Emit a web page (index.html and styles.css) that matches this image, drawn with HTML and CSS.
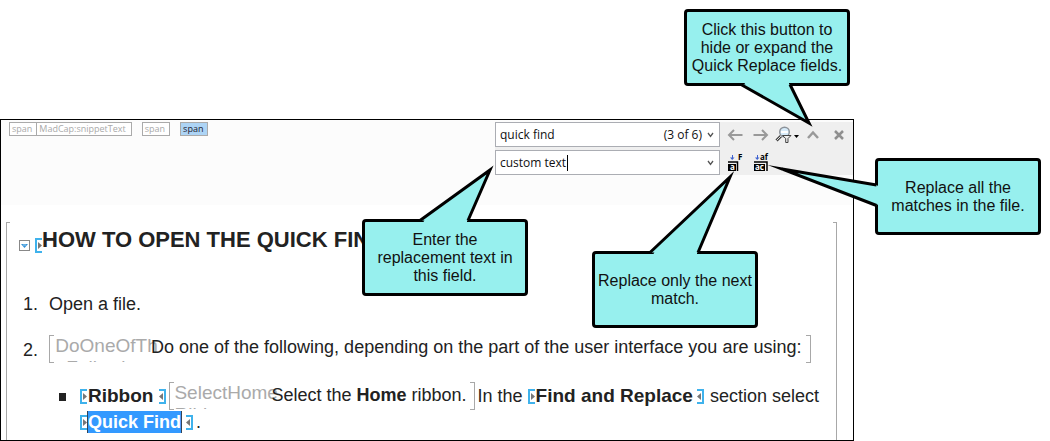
FILE: index.html
```html
<!DOCTYPE html>
<html lang="en">
<head>
<meta charset="utf-8">
<title>Quick Replace</title>
<link rel="stylesheet" href="styles.css">
</head>
<body>
<svg class="defs" aria-hidden="true">
  <symbol id="tag-open" viewBox="0 0 7 15"><path d="M7 1H1V14H7" fill="none" stroke="#3fb2ec" stroke-width="2"/><path d="M3 4L7 7.5L3 11Z" fill="#777"/></symbol>
  <symbol id="tag-close" viewBox="0 0 7 15"><path d="M0 1H6V14H0" fill="none" stroke="#3fb2ec" stroke-width="2"/><path d="M4 4L0 7.5L4 11Z" fill="#777"/></symbol>
</svg>

<main class="window">
  <header class="toolbar">
    <div class="crumbs">
      <div class="crumb-group"><span class="crumb">span</span><span class="crumb">MadCap:snippetText</span></div>
      <div class="crumb-group"><span class="crumb">span</span></div>
      <div class="crumb-group"><span class="crumb current">span</span></div>
    </div>
    <form class="finder">
      <div class="finder-row">
        <div class="field">
          <input type="text" value="quick find" aria-label="Find">
          <span class="count">(3 of 6)</span>
          <button type="button" class="drop" aria-label="Recent searches"><svg width="7" height="6" viewBox="0 0 7 6"><path d="M1 1L3.500 4.500L6 1" fill="none" stroke="#555" stroke-width="1.300"/></svg></button>
        </div>
        <button type="button" class="tool" aria-label="Find previous"><svg width="16" height="12" viewBox="0 0 16 12"><path d="M15.500 6H2M7 1L2 6L7 11" fill="none" stroke="#999" stroke-width="2"/></svg></button>
        <button type="button" class="tool" aria-label="Find next"><svg width="16" height="12" viewBox="0 0 16 12"><path d="M.5 6H14M9 1L14 6L9 11" fill="none" stroke="#999" stroke-width="2"/></svg></button>
        <button type="button" class="tool" aria-label="Search options"><svg width="25" height="18" viewBox="0 0 25 18"><path d="M1.500 14.500L6 10" stroke="#444" stroke-width="3"/><path d="M1.500 14.500L6 10" stroke="#ddd" stroke-width="1"/><circle cx="9.500" cy="6" r="4.800" fill="#d6ebfa" stroke="#8c9299" stroke-width="1.400"/><path d="M6 6H13" stroke="#fff" stroke-width="2"/><path d="M7.500 9.500H16L13 12.500V16.500H10.700V12.500Z" fill="#eee" stroke="#444"/><path d="M19 9H24L21.500 12Z" fill="#000"/></svg></button>
        <button type="button" class="tool" aria-label="Hide or expand replace fields"><svg width="14" height="9" viewBox="0 0 14 9"><path d="M2 8L7 2.500L12 8" fill="none" stroke="#999" stroke-width="2.500"/></svg></button>
        <button type="button" class="tool" aria-label="Close"><svg width="10" height="10" viewBox="0 0 10 10"><path d="M1 1L9 9M9 1L1 9" stroke="#8f8f8f" stroke-width="2.500"/></svg></button>
      </div>
      <div class="finder-row">
        <div class="field">
          <span class="entry"><input class="sized" type="text" value="custom text" aria-label="Replace with"></span>
          <button type="button" class="drop" aria-label="Recent replacements"><svg width="7" height="6" viewBox="0 0 7 6"><path d="M1 1L3.500 4.500L6 1" fill="none" stroke="#555" stroke-width="1.300"/></svg></button>
        </div>
        <button type="button" class="tool" aria-label="Replace next"><svg width="16" height="18" viewBox="0 0 16 18"><path d="M5.500 1V5" stroke="#3f62d0"/><path d="M3 3.500H7.500L5.200 6Z" fill="#3f62d0"/><text x="11" y="6" class="glyph">F</text><path d="M1 8H10.500V17" fill="none" stroke="#000" stroke-width="1.500"/><rect x="1" y="10" width="8" height="7"/><text x="3" y="16" class="glyph light">a</text></svg></button>
        <button type="button" class="tool" aria-label="Replace all"><svg width="16" height="18" viewBox="0 0 16 18"><path d="M4.500 1V5" stroke="#3f62d0"/><path d="M2 3.500H6.500L4.200 6Z" fill="#3f62d0"/><text x="7" y="6" class="glyph">af</text><path d="M1 8H14V17" fill="none" stroke="#000" stroke-width="1.500"/><rect x="1" y="10" width="11" height="7"/><text x="2" y="16" class="glyph light">ac</text></svg></button>
      </div>
    </form>
  </header>

  <article class="document">
    <h1 class="heading">
      <svg class="toggle" width="11" height="11" viewBox="0 0 11 11"><rect x=".5" y=".5" width="10" height="10" fill="#fff" stroke="#888"/><path d="M2 4H9L5.500 8Z" fill="#3593d8"/><path d="M4 5H7" stroke="#9fd0f2"/></svg>
      <svg class="tag low"><use href="#tag-open"/></svg>
      <span class="title">HOW TO OPEN THE QUICK FIND</span>
    </h1>
    <div class="step first"><span class="number">1.</span><span>Open a file.</span></div>
    <div class="step second">
      <span class="number lowered">2.</span>
      <span class="snippet wide"><span class="snippet-name centered">DoOneOfTh Following</span><span>Do one of the following, depending on the part of the user interface you are using:</span></span>
    </div>
    <div class="step choice">
      <span class="bullet"></span>
      <div class="lines">
        <div class="line">
          <svg class="tag"><use href="#tag-open"/></svg><b class="term spaced">Ribbon</b><svg class="tag"><use href="#tag-close"/></svg>
          <span class="snippet inner"><span class="snippet-name">SelectHome Ribbon</span><span>Select the <b>Home</b> ribbon.</span></span>
          <span class="joint">In the</span><svg class="tag"><use href="#tag-open"/></svg><b class="term">Find and Replace</b><svg class="tag after"><use href="#tag-close"/></svg><span class="tail-text">section select</span>
        </div>
        <div class="line last">
          <svg class="tag"><use href="#tag-open"/></svg><mark class="selected">Quick Find</mark><svg class="tag after"><use href="#tag-close"/></svg><span class="stop">.</span>
        </div>
      </div>
    </div>
  </article>
</main>

<aside class="callout hide-note">
  <svg class="pointer" width="166" height="77"><path class="mask" d="M60 73H105V77H62Z"/><path class="edge" d="M57 75.500L125 114L106 75.500"/></svg>
  <p>Click this button to hide or expand the Quick Replace fields.</p>
</aside>
<aside class="callout enter-note">
  <svg class="pointer" width="166" height="77"><path class="mask" d="M61 4H105V0H63Z"/><path class="edge" d="M58 1.500L128 -49L106 1.500"/></svg>
  <p>Enter the replacement text in this field.</p>
</aside>
<aside class="callout next-note">
  <svg class="pointer" width="166" height="77"><path class="mask" d="M61 4H105V0H63Z"/><path class="edge" d="M58 1.500L138 -74L106 1.500"/></svg>
  <p>Replace only the next match.</p>
</aside>
<aside class="callout all-note">
  <svg class="pointer" width="166" height="77"><path class="mask" d="M4 28V47L0 46V27Z"/><path class="edge" d="M1.500 27L-93 11L1.500 47.500"/></svg>
  <p>Replace all the matches in the file.</p>
</aside>
</body>
</html>
```
FILE: styles.css
```css
* { box-sizing: border-box; }
body {
  margin: 0;
  background: #fff;
  color: #222;
  font-family: "Liberation Sans", Arial, sans-serif;
  font-size: 18px;
  line-height: 24px;
  overflow: hidden;
}
.defs { position: absolute; width: 0; height: 0; }
.window {
  margin: 119px 196px 0 0;
  border: 1px solid #000;
}
button {
  display: flex;
  align-items: center;
  justify-content: center;
  border: 0;
  padding: 0;
  background: none;
}

/* Toolbar */
.toolbar {
  display: flex;
  justify-content: space-between;
  align-items: flex-start;
  padding: 2px 0 30px 8px;
  background: #fcfcfc;
}
.crumbs {
  display: flex;
  gap: 10px;
  font: 9px/12px "Open Sans", sans-serif;
}
.crumb-group { display: flex; }
.crumb {
  border: 1px solid #aaa;
  padding: 0 4px 0 2px;
  background: #fff;
  color: #aaa;
}
.crumb + .crumb { border-left: 0; padding-right: 5px; }
.crumb.current { background: #add4f5; color: #223; }
.finder {
  display: flex;
  flex-direction: column;
  gap: 3px;
  width: 358px;
  background: #efefef;
  font: 12px/16px "Open Sans", sans-serif;
}
.finder-row { display: flex; align-items: center; }
.field {
  flex: none;
  display: flex;
  align-items: center;
  width: 225px;
  height: 25px;
  margin-right: 2px;
  border: 1px solid #abadb3;
  background: #fff;
  color: #111;
}
.field input {
  flex: 1;
  min-width: 0;
  border: 0;
  outline: 0;
  padding: 0 0 0 4px;
  background: none;
  color: inherit;
  font: inherit;
}
.entry { flex: 1; }
.field .sized {
  width: 72px;
  border-right: 1px solid #000;
}
.drop { width: 17px; height: 20px; }
.tool { flex: none; width: 26px; height: 25px; }
.tool svg { flex: none; overflow: visible; }
.glyph { font: bold 8px "Open Sans", sans-serif; fill: #000; }
.glyph.light { fill: #fff; }

/* Document */
.document {
  position: relative;
  margin: 17px 16px 0 5px;
  padding: 5px 0 6px 12px;
  border: solid #a8a8a8;
  border-width: 0 1px;
}
.document::before,
.document::after {
  content: "";
  position: absolute;
  top: 0;
  width: 3px;
  height: 1px;
  background: #a8a8a8;
}
.document::before { left: 0; }
.document::after { right: 0; }
.heading {
  display: flex;
  align-items: center;
  margin: 0;
  font-size: 22px;
  line-height: 26px;
}
.toggle { margin: 10px 5px 0 0; }
.tag { flex: none; width: 7px; height: 15px; }
.tag.low { margin-top: 10px; }
.step { display: flex; white-space: nowrap; }
.first { margin-top: 39px; padding-left: 4px; }
.number { width: 26px; }
.lowered { padding-top: 3px; }
.second { margin-top: 19px; padding-left: 4px; }
.snippet {
  position: relative;
  display: flex;
  height: 28px;
  padding: 0 8px 0 5px;
}
.snippet.wide { padding-right: 10px; }
.snippet::before,
.snippet::after {
  content: "";
  position: absolute;
  top: 0;
  bottom: 0;
  width: 4px;
  border: 1px solid #a8a8a8;
}
.snippet::before { left: 0; border-right: 0; }
.snippet::after { right: 0; border-left: 0; }
.snippet-name {
  width: 105px;
  height: 27px;
  margin-right: -8px;
  overflow: hidden;
  color: #aaa;
  font-size: 19px;
  line-height: 22px;
  white-space: normal;
}
.snippet-name.centered { text-align: center; }
.choice { margin-top: 19px; padding-left: 40px; }
.bullet {
  width: 7px;
  height: 8px;
  margin: 11px 14px 0 0;
  background: #222;
}
.line { display: flex; align-items: center; }
.line .snippet { line-height: 26px; }
.term { margin-left: 1px; font-size: 19px; }
.term.spaced { margin-right: 6px; }
.inner { margin-left: 3px; }
.joint { margin: 0 5px 0 3px; }
.after { margin-left: 4px; }
.tail-text { margin-left: 6px; }
.last { line-height: 24px; }
.selected {
  background: #3399ff;
  color: #fff;
  font-weight: bold;
  line-height: 22px;
  border: 1px solid #345;
  border-width: 0 1px;
}
.stop { margin-left: 3px; }

/* Callouts */
.callout {
  position: absolute;
  display: flex;
  align-items: center;
  justify-content: center;
  width: 166px;
  height: 77px;
  border: 3px solid #000;
  border-radius: 4px;
  background: #97f0ee;
  color: #111;
  font-size: 16px;
  line-height: 18px;
  text-align: center;
}
.callout p { position: relative; margin: 0; }
.pointer { position: absolute; top: -3px; left: -3px; overflow: visible; }
.mask { fill: #97f0ee; }
.edge { fill: #97f0ee; stroke: #000; stroke-width: 3px; stroke-miterlimit: 12; }
.hide-note { left: 684px; top: 9px; }
.enter-note { left: 362px; top: 219px; }
.next-note { left: 592px; top: 251px; }
.all-note { left: 875px; top: 158px; }
.enter-note p { width: 140px; }
.all-note p { width: 140px; }
```
